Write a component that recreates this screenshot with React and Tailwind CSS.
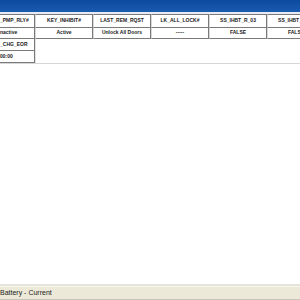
import React from 'react';

const cols = [
  { head: 'KEY_INHIBIT#', value: 'Active' },
  { head: 'LAST_REM_RQST', value: 'Unlock All Doors' },
  { head: 'LK_ALL_LOCK#', value: '-----' },
  { head: 'SS_IHBT_R_03', value: 'FALSE' },
  { head: 'SS_IHBT_R_04', value: 'FALSE' },
];

export default function App() {
  return (
    <div
      className="w-[300px] h-[300px] bg-white flex flex-col overflow-hidden text-[#222]"
      style={{ fontFamily: '"Liberation Sans", Arial, sans-serif' }}
    >
      <div className="h-[12px] shrink-0 bg-gradient-to-b from-[#0c4a9e] to-[#1a5cb0]" />
      <div className="h-[2px] shrink-0 bg-[#e6ebf2]" />

      <div className="flex shrink-0 text-[5px] font-bold">
        <div className="w-[35px] shrink-0 flex flex-col border-r border-[#7a7a7a]">
          <div className="h-[14px] flex items-center border-t border-b border-[#7a7a7a] whitespace-nowrap overflow-hidden">
            _PMP_RLY#
          </div>
          <div className="h-[11px] flex items-center border-b border-[#7a7a7a] whitespace-nowrap overflow-hidden">
            nactive
          </div>
        </div>
        {cols.map((c, i) => (
          <div key={i} className="w-[58px] shrink-0 flex flex-col border-r border-[#7a7a7a]">
            <div className="h-[14px] flex items-center justify-center border-t border-b border-l border-l-[#d8d8d8] border-[#7a7a7a] whitespace-nowrap overflow-hidden">
              {c.head}
            </div>
            <div className="h-[11px] flex items-center justify-center border-b border-l border-l-[#d8d8d8] border-[#7a7a7a] whitespace-nowrap overflow-hidden">
              {c.value}
            </div>
          </div>
        ))}
      </div>

      <div className="flex shrink-0 text-[5px] font-bold border-b border-[#d6d6d6]">
        <div className="w-[35px] shrink-0 flex flex-col border-r border-[#7a7a7a]">
          <div className="h-[12px] flex items-center border-b border-[#7a7a7a] whitespace-nowrap overflow-hidden">
            _CHG_EOR
          </div>
          <div className="h-[12px] flex items-center border-b border-[#7a7a7a] whitespace-nowrap overflow-hidden">
            00:00
          </div>
        </div>
        <div className="flex-1 border-l border-[#e2e2e2]" />
      </div>

      <div className="flex-1" />

      <div className="h-[2px] shrink-0 bg-[#e4e4dc]" />
      <div className="h-[14px] shrink-0 flex items-center bg-[#ece9d8] border-t border-[#f6f5ee] border-b border-b-[#c8c5b4] text-[7px] whitespace-nowrap">
        Battery - Current
      </div>
    </div>
  );
}
